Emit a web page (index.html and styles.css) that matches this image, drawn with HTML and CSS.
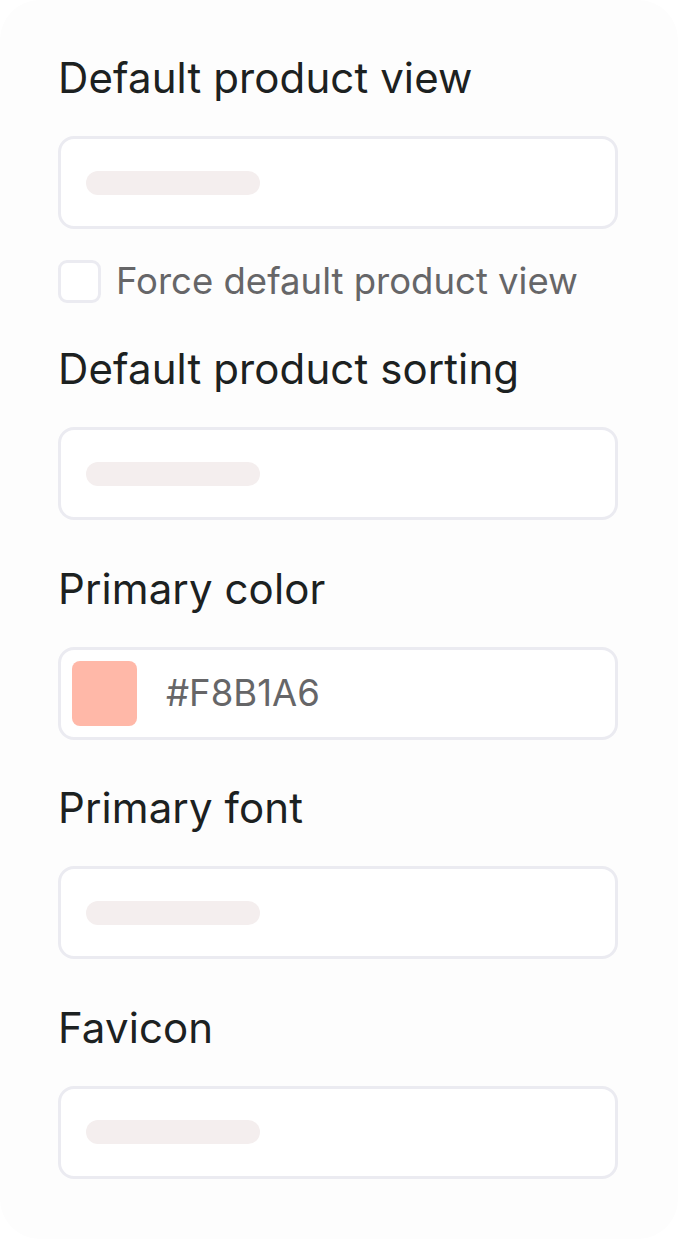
FILE: index.html
```html
<!DOCTYPE html>
<html lang="en">
<head>
<meta charset="utf-8">
<title>Settings</title>
<link rel="stylesheet" href="styles.css">
</head>
<body>
<div class="card">
  <div class="field">
    <div class="label">Default product view</div>
    <div class="input"><span class="placeholder"></span></div>
    <label class="check"><span class="box"></span><span class="check-text">Force default product view</span></label>
  </div>
  <div class="field">
    <div class="label">Default product sorting</div>
    <div class="input"><span class="placeholder"></span></div>
  </div>
  <div class="field">
    <div class="label">Primary color</div>
    <div class="input color-input"><span class="swatch"></span><span class="hex">#F8B1A6</span></div>
  </div>
  <div class="field">
    <div class="label">Primary font</div>
    <div class="input"><span class="placeholder"></span></div>
  </div>
  <div class="field">
    <div class="label">Favicon</div>
    <div class="input"><span class="placeholder"></span></div>
  </div>
</div>
</body>
</html>
```
FILE: styles.css
```css
html, body {
  margin: 0;
  padding: 0;
  background: #ffffff;
}
body {
  font-family: Inter, "Noto Sans", sans-serif;
  width: 678px;
  height: 1239px;
  overflow: hidden;
}
.card {
  box-sizing: border-box;
  height: 1239px;
  background: #fdfdfd;
  border-radius: 40px;
  padding: 55px 60px 0 58px;
  display: flex;
  flex-direction: column;
  gap: 45.5px;
}
.field {
  display: flex;
  flex-direction: column;
}
.label {
  font-size: 42px;
  line-height: 46px;
  color: #1c2121;
  letter-spacing: 0.1px;
}
.input {
  box-sizing: border-box;
  margin-top: 35px;
  height: 93px;
  border: 3px solid #ebebf1;
  border-radius: 16px;
  background: #ffffff;
  display: flex;
  align-items: center;
  padding-left: 25px;
}
.placeholder {
  width: 174px;
  height: 24px;
  border-radius: 12px;
  background: #f4eeee;
}
.check {
  margin-top: 30px;
  margin-bottom: -2.5px;
  display: flex;
  align-items: center;
  gap: 15px;
}
.box {
  box-sizing: border-box;
  width: 43px;
  height: 43px;
  border: 3px solid #ebebf1;
  border-radius: 9px;
  background: #fff;
}
.check-text {
  font-size: 36.5px;
  line-height: 44px;
  color: #666668;
}
.color-input {
  padding-left: 11px;
}
.swatch {
  width: 65px;
  height: 65px;
  border-radius: 8px;
  background: #ffb8a8;
}
.hex {
  margin-left: 29px;
  font-size: 36.5px;
  color: #666668;
}
```
